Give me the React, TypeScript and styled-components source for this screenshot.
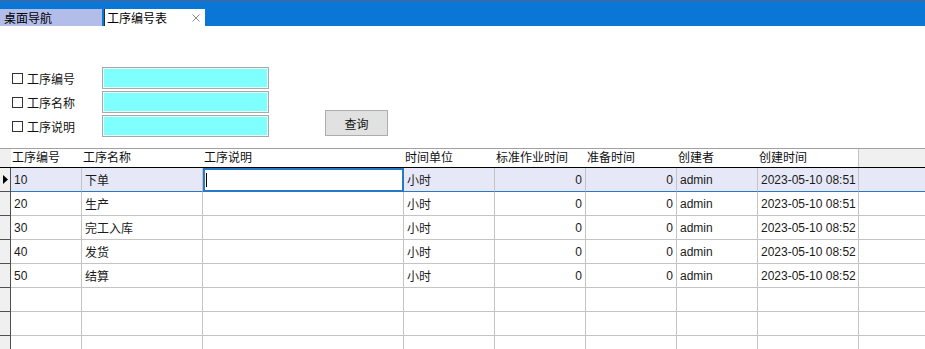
import React from 'react';
import styled, { createGlobalStyle } from 'styled-components';

const GlobalStyle = createGlobalStyle`
  html, body {
    margin: 0;
    padding: 0;
    background: #fff;
  }
  body {
    font-family: 'Liberation Sans', 'Noto Sans CJK SC', sans-serif;
    font-size: 12px;
    color: #1a1a1a;
  }
`;

const COLS = '11px 71px 121px 201px 91px 91px 91px 81px 101px 1fr';

const Page = styled.div`
  width: 925px;
  height: 349px;
  overflow: hidden;
  display: flex;
  flex-direction: column;
  background: #fff;
`;

const TopBar = styled.div`
  height: 24px;
  flex-shrink: 0;
  background: #0a77d6;
  border-top: 2px solid #2e6db4;
  display: flex;
  align-items: flex-end;
  gap: 2px;
`;

const Tab = styled.div<{ $active?: boolean; $width: number }>`
  width: ${({ $width }) => $width}px;
  height: 17px;
  box-sizing: border-box;
  display: flex;
  align-items: center;
  padding-left: ${({ $active }) => ($active ? 2 : 4)}px;
  padding-right: 5px;
  background: ${({ $active }) => ($active ? '#fff' : '#b3bde9')};
  border-left: ${({ $active }) => ($active ? '1px solid #2a2a2a' : 'none')};
  color: #000;
  font-size: 12px;
`;

const TabLabel = styled.span`
  flex: 1;
  white-space: nowrap;
`;

const Search = styled.div`
  display: flex;
  align-items: flex-end;
  padding: 41px 0 0 12px;
`;

const Fields = styled.div`
  display: flex;
  flex-direction: column;
  gap: 2px;
`;

const FieldRow = styled.div`
  display: flex;
  align-items: center;
  height: 22px;
`;

const Check = styled.label`
  width: 90px;
  display: flex;
  align-items: center;
  gap: 4px;
  color: #111;
`;

const Box = styled.span`
  width: 11px;
  height: 11px;
  box-sizing: border-box;
  border: 1px solid #333;
  background: #fff;
`;

const Field = styled.div`
  width: 167px;
  height: 22px;
  box-sizing: border-box;
  background: #80ffff;
  border: 1px solid #a8a8a8;
  box-shadow: inset 0 0 0 1px #e6fbfb;
`;

const Button = styled.button`
  width: 63px;
  height: 26px;
  margin: 0 0 1px 56px;
  background: #e1e1e1;
  border: 1px solid #adadad;
  font-family: inherit;
  font-size: 12px;
  color: #111;
  padding: 0;
`;

const Table = styled.div`
  margin-top: 11px;
  display: flex;
  flex-direction: column;
`;

const HeadRow = styled.div`
  display: grid;
  grid-template-columns: ${COLS};
  height: 20px;
  box-sizing: border-box;
  border-top: 1px solid #a0a0a0;
  border-bottom: 1px solid #000;
`;

const HeadCell = styled.div<{ $gray?: boolean; $edge?: boolean }>`
  padding-left: 1px;
  line-height: 18px;
  white-space: nowrap;
  overflow: hidden;
  color: #111;
  background: ${({ $gray }) => ($gray ? '#f0f0f0' : '#fff')};
  border-right: ${({ $edge }) => ($edge ? '1px solid #c4c4c4' : 'none')};
`;

const Row = styled.div<{ $selected?: boolean }>`
  display: grid;
  grid-template-columns: ${COLS};
  height: 24px;
  background: ${({ $selected }) => ($selected ? '#e6e8f8' : '#fff')};
`;

const RowHead = styled.div`
  background: #f0f0f0;
  border-right: 1px solid #505050;
  border-bottom: 1px solid #505050;
  display: flex;
  align-items: center;
  padding-left: 3px;
`;

const Cell = styled.div<{ $selected?: boolean; $right?: boolean; $last?: boolean }>`
  box-sizing: border-box;
  padding: 0 3px;
  display: flex;
  align-items: center;
  justify-content: ${({ $right }) => ($right ? 'flex-end' : 'flex-start')};
  white-space: nowrap;
  overflow: hidden;
  color: #1a1a1a;
  border-right: ${({ $last }) => ($last ? 'none' : '1px solid #c4c4c4')};
  border-bottom: 1px solid ${({ $selected }) => ($selected ? '#2a78c0' : '#c4c4c4')};
`;

const EditCell = styled.div`
  box-sizing: border-box;
  background: #fff;
  border: 2px solid #2778c8;
  border-bottom-width: 2px;
  display: flex;
  align-items: center;
  padding-left: 1px;
`;

const Caret = styled.span`
  width: 1px;
  height: 14px;
  background: #000;
`;

const headers = ['工序编号', '工序名称', '工序说明', '时间单位', '标准作业时间', '准备时间', '创建者', '创建时间'];

const rows = [
  { no: '10', name: '下单', at: '2023-05-10 08:51' },
  { no: '20', name: '生产', at: '2023-05-10 08:51' },
  { no: '30', name: '完工入库', at: '2023-05-10 08:52' },
  { no: '40', name: '发货', at: '2023-05-10 08:52' },
  { no: '50', name: '结算', at: '2023-05-10 08:52' },
];

const Close = () => (
  <svg width="8" height="8" viewBox="0 0 8 8">
    <path d="M0.5 0.5 L7.5 7.5 M7.5 0.5 L0.5 7.5" stroke="#8a8a8a" strokeWidth="1" />
  </svg>
);

const Pointer = () => (
  <svg width="5" height="9" viewBox="0 0 5 9">
    <polygon points="0,0 5,4.5 0,9" fill="#000" />
  </svg>
);

const App = () => {
  return (
    <Page>
      <GlobalStyle />
      <TopBar>
        <Tab $width={102}>
          <TabLabel>桌面导航</TabLabel>
        </Tab>
        <Tab $width={101} $active>
          <TabLabel>工序编号表</TabLabel>
          <Close />
        </Tab>
      </TopBar>

      <Search>
        <Fields>
          {['工序编号', '工序名称', '工序说明'].map((label) => (
            <FieldRow key={label}>
              <Check>
                <Box />
                {label}
              </Check>
              <Field />
            </FieldRow>
          ))}
        </Fields>
        <Button>查询</Button>
      </Search>

      <Table>
        <HeadRow>
          <HeadCell $gray />
          {headers.map((h, i) => (
            <HeadCell key={h} $edge={i === headers.length - 1}>
              {h}
            </HeadCell>
          ))}
          <HeadCell $gray />
        </HeadRow>

        {rows.map((r, i) => {
          const sel = i === 0;
          return (
            <Row key={r.no} $selected={sel}>
              <RowHead>{sel && <Pointer />}</RowHead>
              <Cell $selected={sel}>{r.no}</Cell>
              <Cell $selected={sel}>{r.name}</Cell>
              {sel ? (
                <EditCell>
                  <Caret />
                </EditCell>
              ) : (
                <Cell />
              )}
              <Cell $selected={sel}>小时</Cell>
              <Cell $selected={sel} $right>
                0
              </Cell>
              <Cell $selected={sel} $right>
                0
              </Cell>
              <Cell $selected={sel}>admin</Cell>
              <Cell $selected={sel}>{r.at}</Cell>
              <Cell $selected={sel} $last />
            </Row>
          );
        })}

        {[0, 1, 2].map((k) => (
          <Row key={`empty-${k}`}>
            <RowHead />
            {Array.from({ length: 8 }).map((_, j) => (
              <Cell key={j} />
            ))}
            <Cell $last />
          </Row>
        ))}
      </Table>
    </Page>
  );
};

export default App;
